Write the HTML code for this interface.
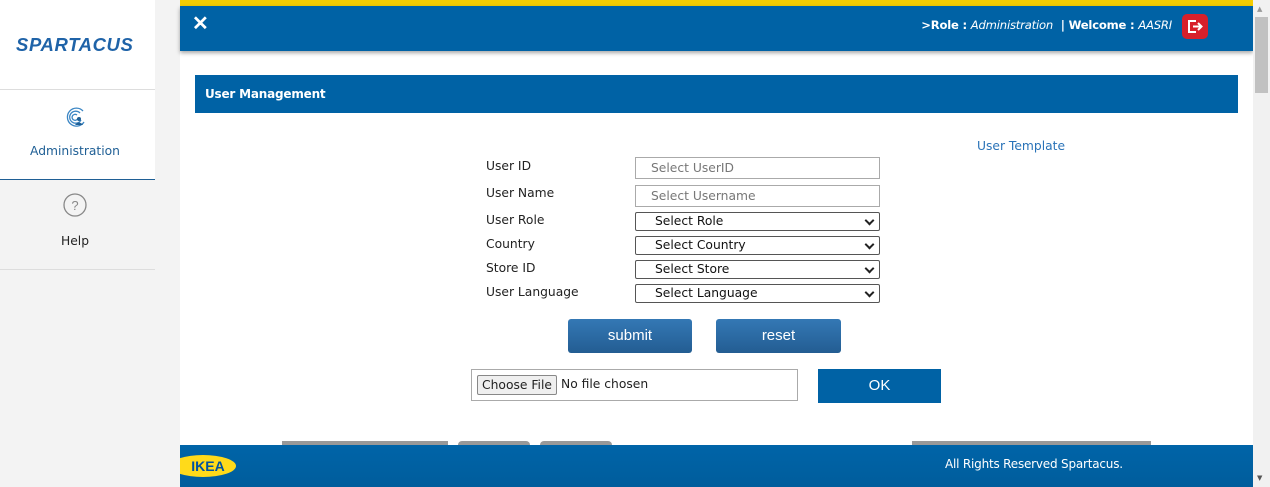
<!DOCTYPE html>
<html><head><style>
*{margin:0;padding:0;box-sizing:border-box}
body{width:1270px;height:487px;overflow:hidden;background:#f3f3f3;font-family:"DejaVu Sans","Liberation Sans",sans-serif;position:relative;font-size:12px;color:#222}
.a{position:absolute}
.lbl{position:absolute;left:486px;font-size:12.3px;color:#222}
.inp{position:absolute;left:635px;width:245px;height:22px;border:1px solid #aaa;background:#fff;color:#777;font-size:12.3px;padding:3px 0 0 15px}
.sel{position:absolute;left:635px;width:245px;height:19px;border:1px solid #555;border-radius:2px;background:#fff;font-size:12.3px;padding:1px 0 0 19px;color:#111}
.sel:after{content:"";position:absolute;right:6px;top:4px;width:5px;height:5px;border-right:2px solid #222;border-bottom:2px solid #222;transform:rotate(45deg)}
.btn{position:absolute;top:319px;height:34px;border-radius:3px;background:linear-gradient(#3478b5,#235d92);color:#fff;font-family:"Liberation Sans",sans-serif;font-size:15px;text-align:center;line-height:33px}
</style></head><body>
<div class="a" style="left:0;top:0;width:155px;height:180px;background:#fff"></div>
<div class="a" style="left:0;top:89px;width:155px;height:1px;background:#ddd"></div>
<div class="a" style="left:0;top:179px;width:155px;height:1px;background:#1f5f95"></div>
<div class="a" style="left:0;top:269px;width:155px;height:1px;background:#ddd"></div>
<div class="a" style="left:16px;top:34px;font:italic bold 18.5px 'Liberation Sans',sans-serif;color:#1f63a8;letter-spacing:0.6px">SPARTACUS</div>
<svg class="a" style="left:63px;top:105px" width="24" height="24" viewBox="0 0 24 24"><g fill="none" stroke="#3b86c4" stroke-width="1.3"><path d="M20 6A9 9 0 1 0 21 17"/><path d="M17 8A6 6 0 1 0 18 15"/><path d="M14 10A3 3 0 1 0 15 13"/></g><circle cx="16" cy="14" r="2" fill="#1f5f95"/><path d="M12 20q4-5 8 0z" fill="#1f5f95"/></svg>
<div class="a" style="left:0;top:144px;width:150px;text-align:center;font-size:12.3px;color:#1f5f95">Administration</div>
<svg class="a" style="left:63px;top:193px" width="24" height="24"><circle cx="12" cy="12" r="11" fill="none" stroke="#888" stroke-width="1.3"/><text x="12" y="17" font-size="13" text-anchor="middle" fill="#888" font-family="Liberation Sans">?</text></svg>
<div class="a" style="left:0;top:234px;width:150px;text-align:center;font-size:12.3px;color:#222">Help</div>
<div class="a" style="left:180px;top:0;width:1073px;height:487px;background:#fff;overflow:hidden">
<div class="a" style="left:0;top:445px;width:1073px;height:42px;background:linear-gradient(#0064a8,#005d9c)"></div>
<div class="a" style="left:-10px;top:455px;width:66px;height:22px;border-radius:50%;background:#ffda1a;color:#0051a0;font:bold 14px 'Liberation Sans',sans-serif;text-align:center;line-height:22px;padding-left:10px">IKEA</div>
</div>
<div class="a" style="left:180px;top:0;width:1073px;height:6px;background:#f5cc00"></div>
<div class="a" style="left:180px;top:6px;width:1073px;height:45px;background:#0062a5;box-shadow:0 2px 4px rgba(0,0,0,.35)"></div>
<div class="a" style="left:192px;top:11px;color:#fff;font:bold 20px 'Liberation Sans',sans-serif">✕</div>
<div class="a" style="right:98px;top:18px;color:#fff;font-size:11.6px;font-weight:bold;white-space:nowrap;letter-spacing:-0.2px">&gt;Role : <i style="font-weight:normal">Administration</i> &nbsp;| Welcome : <i style="font-weight:normal">AASRI</i></div>
<div class="a" style="left:1182px;top:14px;width:26px;height:25px;background:#d7202b;border-radius:5px"><svg width="26" height="25"><path d="M14 7H7v11h7" fill="none" stroke="#fff" stroke-width="2"/><path d="M11 12.5h8M16 9l3.5 3.5L16 16" fill="none" stroke="#fff" stroke-width="2"/></svg></div>
<div class="a" style="left:195px;top:75px;width:1043px;height:38px;background:#0062a5;color:#fff;font-size:12px;font-weight:bold;padding:12px 10px;letter-spacing:-0.2px">User Management</div>
<div class="a" style="left:977px;top:139px;color:#2a73b8;font-size:12.3px">User Template</div>
<div class="lbl" style="top:159px">User ID</div>
<div class="lbl" style="top:186px">User Name</div>
<div class="lbl" style="top:213px">User Role</div>
<div class="lbl" style="top:237px">Country</div>
<div class="lbl" style="top:261px">Store ID</div>
<div class="lbl" style="top:285px">User Language</div>
<div class="inp" style="top:157px">Select UserID</div>
<div class="inp" style="top:185px">Select Username</div>
<div class="sel" style="top:212px">Select Role</div>
<div class="sel" style="top:236px">Select Country</div>
<div class="sel" style="top:260px">Select Store</div>
<div class="sel" style="top:284px">Select Language</div>
<div class="btn" style="left:568px;width:124px">submit</div>
<div class="btn" style="left:716px;width:125px">reset</div>
<div class="a" style="left:471px;top:369px;width:327px;height:32px;border:1px solid #aaa;background:#fff"></div>
<div class="a" style="left:477px;top:375px;width:80px;height:20px;border:1px solid #888;border-radius:2px;background:#efefef;font-size:12.3px;text-align:center;line-height:18px">Choose File</div>
<div class="a" style="left:561px;top:377px;font-size:12.3px">No file chosen</div>
<div class="a" style="left:818px;top:369px;width:123px;height:34px;background:#0062a5;color:#fff;font:15px 'Liberation Sans',sans-serif;text-align:center;line-height:34px">OK</div>
<div class="a" style="left:282px;top:441px;width:166px;height:4px;background:#999"></div>
<div class="a" style="left:458px;top:441px;width:72px;height:4px;background:#999;border-radius:4px 4px 0 0"></div>
<div class="a" style="left:540px;top:441px;width:72px;height:4px;background:#999;border-radius:4px 4px 0 0"></div>
<div class="a" style="left:912px;top:441px;width:239px;height:4px;background:#999"></div>
<div class="a" style="left:945px;top:457px;color:#fff;font-size:12px;letter-spacing:-0.2px">All Rights Reserved Spartacus.</div>
<div class="a" style="left:1253px;top:0;width:17px;height:487px;background:#f1f1f1"></div>
<div class="a" style="left:1255px;top:17px;width:13px;height:76px;background:#c1c1c1"></div>
<div class="a" style="left:1257px;top:5px;font-size:7px;color:#999">▲</div>
<div class="a" style="left:1257px;top:474px;font-size:7px;color:#555">▼</div>
</body></html>
